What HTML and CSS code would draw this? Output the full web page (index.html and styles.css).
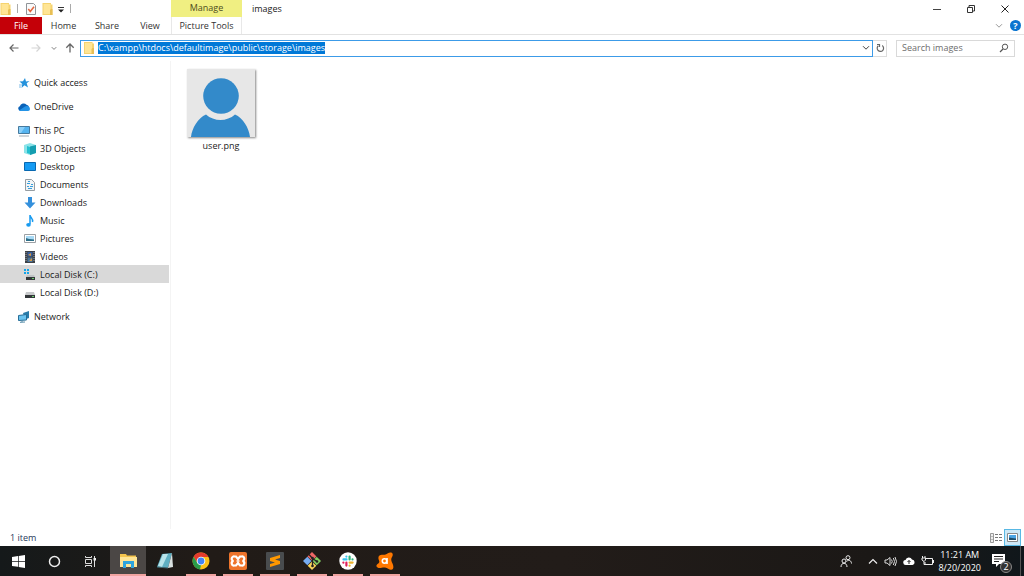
FILE: index.html
```html
<!DOCTYPE html>
<html lang="en">
<head>
<meta charset="utf-8">
<title>images</title>
<link rel="stylesheet" href="styles.css">
</head>
<body>
<svg class="defs" aria-hidden="true">
  <symbol id="folder" viewBox="0 0 10 12"><path d="M0 0h8.5v1.6H10V12H0z" fill="#f5d36f"/><path d="M1 1h7v10H1z" fill="#ffe595"/><path d="M8.5 6H10v6H7.5V7z" fill="#e8bf55"/></symbol>
  <symbol id="chevron" viewBox="0 0 8 6"><path d="M1 1.2l3 3 3-3" fill="none" stroke="currentColor"/></symbol>
</svg>
<div class="window">
  <header class="titlebar">
    <div class="quick">
      <svg class="folder" width="11" height="12"><use href="#folder"/></svg>
      <span class="sep"></span>
      <button class="plain check" aria-label="Properties"><svg width="10" height="12" viewBox="0 0 10 12"><path d="M.5.5h7l2 2v9h-9z" fill="#fafafa" stroke="#909498"/><path d="M2.3 6l2 2.500L8 3.700" fill="none" stroke="#e2643c" stroke-width="1.500"/></svg></button>
      <button class="plain newf" aria-label="New folder"><svg width="11" height="12"><use href="#folder"/></svg></button>
      <button class="plain more" aria-label="Customize toolbar"><svg width="6" height="6" viewBox="0 0 6 6"><path d="M0 .5h6" stroke="#333"/><path d="M0 2.500h6L3 5.500z" fill="#222"/></svg></button>
      <span class="sep"></span>
    </div>
    <div class="manage">Manage</div>
    <h1 class="title">images</h1>
    <div class="controls">
      <button class="plain" aria-label="Minimize"><svg width="10" height="10" viewBox="0 0 10 10"><path d="M1 5.500h8" stroke="#444"/></svg></button>
      <button class="plain" aria-label="Restore"><svg width="10" height="10" viewBox="0 0 10 10"><path d="M1.500 3.500h5v5h-5zM3 3V1.500h5.500V7H7" fill="none" stroke="#333"/></svg></button>
      <button class="plain" aria-label="Close"><svg width="10" height="10" viewBox="0 0 10 10"><path d="M1.500 1.500l7 7M8.500 1.500l-7 7" stroke="#222"/></svg></button>
    </div>
  </header>
  <nav class="ribbon">
    <button class="tab file">File</button>
    <button class="tab home">Home</button>
    <button class="tab share">Share</button>
    <button class="tab view">View</button>
    <button class="tab tools">Picture Tools</button>
    <div class="help">
      <button class="plain" aria-label="Expand ribbon"><svg width="8" height="6" color="#999"><use href="#chevron"/></svg></button>
      <button class="plain helpmark" aria-label="Help">?</button>
    </div>
  </nav>
  <div class="addressbar">
    <div class="arrows">
      <button class="plain" aria-label="Back"><svg width="10" height="10" viewBox="0 0 10 10"><path d="M9.500 5H1M4.500 1.500L1 5l3.500 3.500" fill="none" stroke="#666" stroke-width="1.200"/></svg></button>
      <button class="plain" aria-label="Forward"><svg width="10" height="10" viewBox="0 0 10 10"><path d="M.5 5H9M5.500 1.500L9 5 5.500 8.500" fill="none" stroke="#d4d4d4" stroke-width="1.200"/></svg></button>
      <button class="plain recent" aria-label="Recent locations"><svg width="6" height="5" color="#555"><use href="#chevron"/></svg></button>
      <button class="plain" aria-label="Up"><svg width="10" height="10" viewBox="0 0 10 10"><path d="M5 9.500V1M1.300 4.700L5 1l3.700 3.700" fill="none" stroke="#666" stroke-width="1.300"/></svg></button>
    </div>
    <div class="path">
      <svg width="10" height="12"><use href="#folder"/></svg>
      <span class="address" role="textbox" aria-label="Address"><mark>C:\xampp\htdocs\defaultimage\public\storage\images</mark></span>
      <button class="plain" aria-label="Previous locations"><svg width="8" height="6" color="#444"><use href="#chevron"/></svg></button>
    </div>
    <button class="plain refresh" aria-label="Refresh"><svg width="9" height="10" viewBox="0 0 9 10"><path d="M2.300 2.800A3.200 3.200 0 1 0 6.200 2.600M1 1.500h2.500V4" fill="none" stroke="#666" stroke-width="1.200"/></svg></button>
    <div class="search">
      <input type="search" aria-label="Search images" placeholder="Search images">
      <svg width="10" height="10" viewBox="0 0 10 10"><circle cx="6" cy="3.800" r="2.700" fill="none" stroke="#555"/><path d="M4 6L1 9" stroke="#555" stroke-width="1.300"/></svg>
    </div>
  </div>
  <div class="body">
    <nav class="sidebar">
      <a class="row top" href="#"><svg width="12" height="12" viewBox="0 0 12 12"><path d="M7 1l1 3.500 3.500-.5-2.800 2.300L10 10.500 6.500 8.300 3.500 11l.8-4L1.500 4.500l3.500-.2z" fill="#2492dc"/><path d="M1 8h3M1 10h2" stroke="#7ebbe5"/></svg>Quick access</a>
      <a class="row top" href="#"><svg width="12" height="12" viewBox="0 0 12 12"><path d="M2.500 10A2.500 2.500 0 0 1 1.800 5.200 3.900 3.900 0 0 1 8.500 3.800 3 3 0 0 1 11 6l-1 4z" fill="#0a62b8"/><path d="M1 9.500l6-4a3.200 3.200 0 0 1 5 2.500A2 2 0 0 1 10 10H2.500z" fill="#2493e6"/></svg>OneDrive</a>
      <div class="group">
        <a class="row" href="#"><svg width="12" height="12" viewBox="0 0 12 12"><path d="M.5 1.500h11v7H.5z" fill="#55b4f0" stroke="#467a9e"/><path d="M1 2h6L3 8H1z" fill="#8bd0fa"/><path d="M1 11h10" stroke="#9daab4"/></svg>This PC</a>
        <a class="row sub" href="#"><svg width="12" height="12" viewBox="0 0 12 12"><path d="M0 2l6-2 6 2v8l-6 2-6-2z" fill="#8be3e8"/><path d="M6 3.500L12 2v8l-6 2z" fill="#159eb0"/><path d="M3 3l3 1v7l-3-1z" fill="#24c0d0"/></svg>3D Objects</a>
        <a class="row sub" href="#"><svg width="12" height="12" viewBox="0 0 12 12"><path d="M.5 1.500h11v8H.5z" fill="#159bf3" stroke="#0868b0"/></svg>Desktop</a>
        <a class="row sub" href="#"><svg width="12" height="12" viewBox="0 0 12 12"><path d="M1.500.5h6l3 3v8h-9z" fill="#f2f4f5" stroke="#969da2"/><path d="M4 2.500h2M3 4.500h3M7 5.500h2M3 7.500h2M6 7.500h3M4 9.500h4" stroke="#3a9fdc"/></svg>Documents</a>
        <a class="row sub" href="#"><svg width="12" height="12" viewBox="0 0 12 12"><path d="M4 0h4v5.500h3.500L6 11.500.5 5.500H4z" fill="#3490dc"/></svg>Downloads</a>
        <a class="row sub" href="#"><svg width="12" height="12" viewBox="0 0 12 12"><path d="M6 9V0c0 3 3.500 3 2.500 7" fill="none" stroke="#189bf0" stroke-width="1.500"/><ellipse cx="4.500" cy="9.800" rx="2.300" ry="1.900" fill="#189bf0"/></svg>Music</a>
        <a class="row sub" href="#"><svg width="12" height="12" viewBox="0 0 12 12"><path d="M.5 1.500h11v8H.5z" fill="#fff" stroke="#9ba0a4"/><path d="M2 3h8v5H2z" fill="#a8daf6"/><path d="M2 5l3 1 5 .5V8H2z" fill="#2c6d86"/></svg>Pictures</a>
        <a class="row sub" href="#"><svg width="12" height="12" viewBox="0 0 12 12"><path d="M1 0h10v12H1z" fill="#3d4147"/><path d="M3.500 1h5v4.500h-5z" fill="#385f9c"/><path d="M3.500 6.500h5V11h-5z" fill="#4b769c"/><path d="M4 4l3-2v3zM5 10l3-3v3z" fill="#d69842"/><path d="M2 1v10M10 1v10" stroke="#a8a8a8" stroke-dasharray="1 1"/></svg>Videos</a>
        <a class="row sub selected" href="#" aria-current="page"><svg width="12" height="12" viewBox="0 0 12 12"><path d="M0 0h2v2H0zM3 0h2v2H3zM0 3h2v2H0zM3 3h2v2H3z" fill="#12a5ea"/><path d="M3 6h7l1 2H2z" fill="#bfc2c4"/><path d="M2 8h9v3H2z" fill="#33373a"/><path d="M8 9.500h2" stroke="#6bd06b"/></svg>Local Disk (C:)</a>
        <a class="row sub" href="#"><svg width="12" height="12" viewBox="0 0 12 12"><path d="M2 5h8l1 3H1z" fill="#c7c9cb"/><path d="M1 8h10v3H1z" fill="#33373a"/><path d="M8 9.500h2" stroke="#6bd06b"/></svg>Local Disk (D:)</a>
      </div>
      <a class="row" href="#"><svg width="12" height="12" viewBox="0 0 12 12"><path d="M5 2l6-2v7l-4 1.500z" fill="#287ba8"/><path d="M.5 4.500l8-1v5.500l-8 .5z" fill="#6bc4ef" stroke="#276e98"/><path d="M2 11.300l5-.3M4 9v2" stroke="#548aa7"/></svg>Network</a>
    </nav>
    <main class="files">
      <figure class="item">
        <svg class="thumb" width="68" height="68" viewBox="0 0 68 68" role="img" aria-label="user.png"><path d="M0 0h68v68H0z" fill="#e7e7e7"/><circle cx="34" cy="27" r="17.800" fill="#338aca"/><path d="M4 68C5 59 11 49 19 45.500c8 7.300 21 7.300 29 0C56 49 62 59 63 68z" fill="#338aca"/></svg>
        <figcaption>user.png</figcaption>
      </figure>
    </main>
  </div>
  <footer class="status">
    <span class="count">1 item</span>
    <button class="plain" aria-label="Details view"><svg width="12" height="10" viewBox="0 0 12 10"><path d="M.5.5h3v9h-3z" fill="#eee" stroke="#999"/><path d="M1 3.500h2M1 6.500h2" stroke="#bbb"/><path d="M5 1.500h3M9 1.500h3M5 4.500h3M9 4.500h3M5 7.500h3M9 7.500h3" stroke="#777"/></svg></button>
    <button class="plain large" aria-label="Large icons view"><svg width="11" height="9" viewBox="0 0 11 9"><path d="M.5.5h10v8H.5z" fill="#fff" stroke="#888"/><path d="M2 2h7v5H2z" fill="#4ba4e4"/><path d="M2 4.500l3 .5 4 .5V7H2z" fill="#204d69"/></svg></button>
  </footer>
</div>
<footer class="taskbar">
  <div class="system">
    <button class="task" aria-label="Start"><svg width="13" height="13" viewBox="0 0 13 13"><path d="M0 2l6-.9V6H0zM6.700 1L13 0v6H6.700zM0 6.700h6v5L0 10.900zM6.700 6.700H13V13l-6.300-1z" fill="#fff"/></svg></button>
    <button class="task" aria-label="Cortana"><svg width="13" height="13" viewBox="0 0 13 13"><circle cx="6.500" cy="6.500" r="5" fill="none" stroke="#eee" stroke-width="1.500"/></svg></button>
    <button class="task" aria-label="Task view"><svg width="13" height="13" viewBox="0 0 13 13"><path d="M1.500 4.500h6v4h-6zM1.500 1v1.500h6V1M1.500 12v-1.500h6V12M10.500 1v11" fill="none" stroke="#ddd"/><path d="M9.500 3h2.500v2.500H9.500z" fill="#eee"/></svg></button>
  </div>
  <div class="apps">
    <button class="task open active" aria-label="File Explorer"><svg width="17" height="16" viewBox="0 0 17 16"><path d="M0 1h6l1 1.500h9V14H0z" fill="#f4c44d"/><path d="M0 4h17v10H0z" fill="#ffe595"/><path d="M3 8h11v7h-3v-4H6v4H3z" fill="#2fa5dd"/></svg></button>
    <button class="task" aria-label="Notepad"><svg width="18" height="18" viewBox="0 0 18 18"><path d="M6 2l10-1-4 15-11-1z" fill="#5fafc2"/><path d="M7 2l5 0-6 13-4-1z" fill="#b9e4ea"/><path d="M16 1l1 14-5 1z" fill="#d9e1e0"/><path d="M1 15l11 1" stroke="#426771"/></svg></button>
    <button class="task open" aria-label="Chrome"><svg width="18" height="18" viewBox="0 0 18 18"><circle cx="9" cy="9" r="8.500" fill="#fbc116"/><path d="M1.600 4.800A8.500 8.500 0 0 1 16.400 5H9L5.500 11z" fill="#e33b2e"/><path d="M1.600 4.800L5.500 11 9 13l-1 4.400A8.500 8.500 0 0 1 1.600 4.800z" fill="#299b4a"/><circle cx="9" cy="9" r="4.300" fill="#fff"/><circle cx="9" cy="9" r="3.400" fill="#4285f4"/></svg></button>
    <button class="task open" aria-label="XAMPP"><svg width="18" height="18" viewBox="0 0 18 18"><rect width="18" height="18" rx="2" fill="#ee742b"/><path d="M5.500 4.500H7L9 7l2-2.500h1.500a2 2 0 0 1 1 4.500 2 2 0 0 1-1 4.500H11L9 11l-2 2.500H5.500a2 2 0 0 1-1-4.500 2 2 0 0 1 1-4.500z" fill="none" stroke="#fff" stroke-width="2.200"/><path d="M7.500 9h3" stroke="#fff" stroke-width="1.500"/></svg></button>
    <button class="task open" aria-label="Sublime Text"><svg width="18" height="18" viewBox="0 0 18 18"><rect width="18" height="18" rx="1" fill="#494c4e"/><path d="M4 6l10-3v3L9 7.500l5 1.500v3L4 15v-3l5-1.500L4 9z" fill="#ff9800"/></svg></button>
    <button class="task open" aria-label="Git Bash"><svg width="18" height="18" viewBox="0 0 18 18"><path d="M4.500 4.500L9 0l4.500 4.500L9 8.500z" fill="#ef6765"/><path d="M0 9l4.300-4.300L8.500 9l-4.200 4.300z" fill="#76acf2"/><path d="M9.500 9l4.200-4.300L18 9l-4.300 4.300z" fill="#83cf62"/><path d="M4.700 13.700L9 9.500l4.300 4.200L9 18z" fill="#f7d45b"/><path d="M6 2.500l3.500 4V14M9.500 6.500L14 9.500" fill="none" stroke="#222" stroke-width="1.300"/><circle cx="9.500" cy="6" r="1.300" fill="#222"/><circle cx="14" cy="9.500" r="1.300" fill="#222"/><circle cx="9.500" cy="14" r="1.300" fill="#222"/></svg></button>
    <button class="task open" aria-label="Slack"><svg width="18" height="18" viewBox="0 0 18 18"><circle cx="9" cy="9" r="8.700" fill="#fff"/><g fill="none" stroke-width="2.200" stroke-linecap="round"><path d="M7.400 4.500v.1M4.500 7.400h3" stroke="#36c5f0"/><path d="M10.600 4.500v3M13.500 7.400v.1" stroke="#2eb67d"/><path d="M10.600 10.600h3M10.600 13.600v.1" stroke="#ecb22e"/><path d="M7.400 10.600v3M4.400 10.600v.1" stroke="#e01e5a"/></g></svg></button>
    <button class="task open" aria-label="Avast"><svg width="18" height="18" viewBox="0 0 18 18"><path d="M3.500 3.500c2-1.500 4 0 6-1C11.500 1.500 13 0 15 .5c2.300.6 2 3 1 4.500-1.500 2.500-.5 4 .5 6.500 1 2 1.500 5-.5 6-2.500 1-4-1.500-7-2-2.500-.4-4 1-6.500.5-2-.5-3-2.500-1-4 3-2 1.500-3 1-5-.2-1.500 0-2.700 1-3.500z" fill="#ff7800"/><circle cx="8.500" cy="9" r="2.200" fill="none" stroke="#fff" stroke-width="1.600"/><path d="M11 6v6" stroke="#fff" stroke-width="1.600"/></svg></button>
  </div>
  <div class="tray">
    <button class="plain people" aria-label="People"><svg width="12" height="13" viewBox="0 0 12 13"><g fill="none" stroke="#eee"><circle cx="4" cy="6" r="2"/><path d="M1 12c0-5 6-5 6 0"/><circle cx="8" cy="2.700" r="2"/><path d="M6.500 6.500C9 4 11.500 6 11.500 8.500"/></g></svg></button>
    <button class="plain" aria-label="Show hidden icons"><svg width="10" height="7" viewBox="0 0 10 7"><path d="M1 5.500l4-4 4 4" fill="none" stroke="#eee" stroke-width="1.200"/></svg></button>
    <button class="plain" aria-label="Volume"><svg width="13" height="11" viewBox="0 0 13 11"><path d="M1 4v3h2l3 2.500v-8L3 4zM7.500 3.500q1.500 2 0 4M9.300 2q2.500 3.500 0 7M11 1q3 4.500 0 9" fill="none" stroke="#ddd"/></svg></button>
    <button class="plain" aria-label="Cloud sync"><svg width="12" height="10" viewBox="0 0 12 10"><path d="M3 9a2.500 2.500 0 0 1-.5-5A3.500 3.500 0 0 1 9 3.500 2.800 2.800 0 0 1 9.500 9z" fill="#fff"/><path d="M6 8V4.500M4.500 6L6 4.500 7.500 6" fill="none" stroke="#222"/></svg></button>
    <button class="plain" aria-label="Battery"><svg width="13" height="10" viewBox="0 0 13 10"><path d="M5 2.500h6.500v6H4V6M12.500 4v3M1 2h3.500v2L3 5.500 1 4zM3 5.500v3h1M1.500 0v2M4 0v2" fill="none" stroke="#eee"/></svg></button>
    <div class="clock"><time>11:21 AM</time><time>8/20/2020</time></div>
    <button class="plain notify" aria-label="Notifications"><svg width="13" height="14" viewBox="0 0 13 14"><path d="M0 0h13v10H7l-3 3v-3H0z" fill="#fff"/><path d="M2 2.500h9M2 5h9M2 7.500h5" stroke="#222"/></svg><span class="badge">2</span></button>
    <button class="plain desktop" aria-label="Show desktop"></button>
  </div>
</footer>
</body>
</html>
```
FILE: styles.css
```css
* { box-sizing: border-box; }
body {
  margin: 0;
  min-height: 100vh;
  display: flex;
  flex-direction: column;
  background: #fff;
  color: #1a1a1a;
  font: 9px/12px "Open Sans", "Noto Sans", sans-serif;
}
button, input { font: inherit; color: inherit; }
svg { display: block; flex: none; }
.defs { position: absolute; width: 0; height: 0; }
.plain {
  display: flex;
  align-items: center;
  justify-content: center;
  padding: 0;
  border: 0;
  background: none;
}
.window { flex: 1; display: flex; flex-direction: column; }

.titlebar { display: flex; height: 17px; }
.quick { display: flex; align-items: center; width: 171px; }
.sep { width: 1px; height: 9px; background: #aaa; }
.folder { margin-right: 6px; }
.check { margin-left: 8px; }
.newf { margin-left: 6px; }
.more { margin: 2px 6px 0 5px; }
.manage {
  width: 71px;
  background: #f0ef82;
  color: #4c4c20;
  text-align: center;
  line-height: 16px;
}
.title { flex: 1; margin: 0; padding-left: 10px; font-size: 9px; font-weight: 400; line-height: 18px; }
.controls { display: flex; padding-right: 2px; }
.controls .plain { width: 34px; }

.ribbon { display: flex; height: 18px; border-bottom: 1px solid #e2e2e2; }
.tab { padding: 1px 0 0; border: 0; background: none; color: #333; line-height: 16px; }
.file { width: 42px; background: #c40008; color: #fff; }
.home { width: 43px; }
.share { width: 44px; }
.view { width: 42px; }
.tools { width: 71px; border: solid #e8e8e8; border-width: 0 1px; }
.help { display: flex; align-items: center; gap: 7px; margin-left: auto; padding-right: 3px; }
.helpmark {
  width: 11px;
  height: 11px;
  border-radius: 50%;
  background: #0a74d0;
  color: #fff;
  font-weight: 700;
}

.addressbar { display: flex; align-items: center; height: 26px; padding-right: 9px; }
.arrows { display: flex; align-items: center; width: 80px; padding-left: 9px; gap: 12px; }
.recent { margin: 0 -4px 0 -2px; }
.path {
  flex: 1;
  display: flex;
  align-items: center;
  height: 17px;
  padding: 0 2px 0 3px;
  border: 1px solid #3c9be8;
}
.address { flex: 1; padding-left: 4px; }
.address mark { display: inline-block; background: #0078d7; color: #fff; }
.refresh { width: 14px; height: 17px; padding-left: 2px; border: solid #ddd; border-width: 1px 1px 1px 0; }
.search {
  display: flex;
  align-items: center;
  width: 119px;
  height: 17px;
  margin-left: 9px;
  padding: 0 5px;
  border: 1px solid #d9d9d9;
}
.search input { flex: 1; min-width: 0; padding: 0; border: 0; outline: 0; background: none; }
.search input::placeholder { color: #6d6d6d; opacity: 1; }

.body { flex: 1; display: flex; }
.sidebar { width: 171px; padding: 12px 1px 0 0; border-right: 1px solid #f4f4f4; }
.row {
  display: flex;
  align-items: center;
  gap: 4px;
  height: 18px;
  padding: 2px 0 0 18px;
  color: inherit;
  text-decoration: none;
}
.top, .group { margin-bottom: 6px; }
.sub { padding-left: 24px; }
.selected { background: #d9d9d9; }
.files { flex: 1; padding: 8px 15px; }
.item { width: 70px; margin: 0; text-align: center; }
.thumb { margin: 0 auto; box-shadow: 1px 1px 2px #888; }
.item figcaption { padding-top: 3px; }

.status { display: flex; align-items: center; height: 17px; padding: 0 3px 0 10px; color: #26395b; }
.count { flex: 1; }
.large { width: 17px; height: 17px; margin-left: 2px; border: 1px solid #58b8e4; background: #cce8f7; }

.taskbar {
  display: flex;
  height: 30px;
  background: linear-gradient(90deg, #15191a, #211b17 20%, #221c19 55%, #1b1816 85%, #10171b);
  color: #fff;
}
.system { display: flex; }
.task {
  display: flex;
  align-items: center;
  justify-content: center;
  width: 36px;
  padding: 0;
  border: 0;
  background: none;
}
.apps { display: flex; justify-content: space-between; width: 293px; margin-left: 2px; }
.open {
  background: linear-gradient(#f0a3a0, #f0a3a0) center bottom / 30px 2px no-repeat;
}
.active { background-color: #4b4745; background-size: 36px 2px; }
.tray { display: flex; align-items: center; gap: 6px; margin-left: auto; }
.people { margin-right: 10px; }
.clock { display: flex; flex-direction: column; align-items: center; margin-left: -2px; line-height: 13px; }
.notify { position: relative; width: 20px; height: 24px; margin-left: 5px; justify-content: flex-start; }
.badge {
  position: absolute;
  right: 0;
  bottom: 0;
  width: 12px;
  height: 12px;
  border: 1px solid #888;
  border-radius: 50%;
  background: #333;
  line-height: 10px;
}
.desktop { align-self: stretch; width: 4px; margin-left: 2px; border-left: 1px solid #555; }
```
